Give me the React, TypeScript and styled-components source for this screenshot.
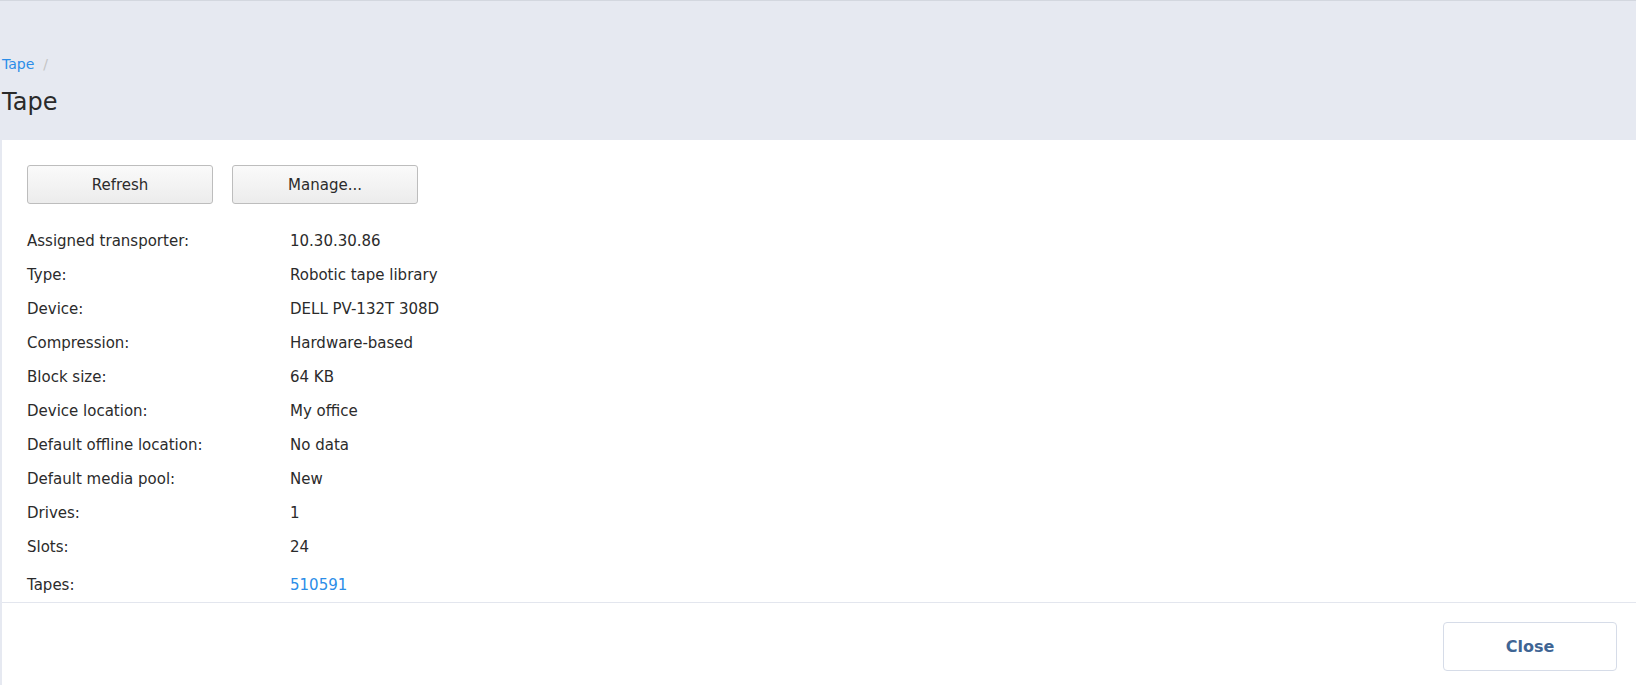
import React from 'react';
import styled, { createGlobalStyle } from 'styled-components';

const GlobalStyle = createGlobalStyle`
  html, body {
    margin: 0;
    padding: 0;
    background: #e6e9f1;
    font-family: "DejaVu Sans", Verdana, sans-serif;
    color: #2b2b2b;
  }
`;

const Page = styled.div`
  display: flex;
  flex-direction: column;
  height: 685px;
  border-top: 1px solid #d3d7df;
  box-sizing: border-box;
`;

const Header = styled.header`
  height: 139px;
  padding: 52px 0 0 2px;
  box-sizing: border-box;
`;

const Breadcrumb = styled.div`
  font-size: 14px;
  line-height: 22px;
  color: #2b8de8;
  display: flex;
  gap: 9px;
`;

const Separator = styled.span`
  color: #c4c4c4;
`;

const Title = styled.h1`
  margin: 11px 0 0;
  font-size: 24px;
  font-weight: normal;
  line-height: 32px;
  color: #2a2a2a;
`;

const Panel = styled.main`
  flex: 1;
  margin-left: 2px;
  background: #ffffff;
  display: flex;
  flex-direction: column;
`;

const Body = styled.section`
  padding: 25px 0 0 25px;
`;

const Toolbar = styled.div`
  display: flex;
  gap: 19px;
  margin-bottom: 20px;
`;

const Button = styled.button`
  width: 186px;
  height: 39px;
  border: 1px solid #bdbdbd;
  border-radius: 3px;
  background: linear-gradient(#fafafa, #ececec);
  font-family: inherit;
  font-size: 15px;
  color: #2b2b2b;
  cursor: pointer;
`;

const InfoList = styled.dl`
  margin: 0;
  display: grid;
  grid-template-columns: 263px 1fr;
`;

const Label = styled.dt<{ $extra?: boolean }>`
  margin: 0;
  font-size: 15px;
  line-height: 34px;
  padding-top: ${(p) => (p.$extra ? '4px' : '0')};
`;

const Value = styled.dd<{ $link?: boolean; $extra?: boolean }>`
  margin: 0;
  font-size: 15px;
  line-height: 34px;
  padding-top: ${(p) => (p.$extra ? '4px' : '0')};
  color: ${(p) => (p.$link ? '#2b8de8' : '#2b2b2b')};
`;

const Footer = styled.footer`
  margin-top: auto;
  border-top: 1px solid #e3e6ee;
  display: flex;
  justify-content: flex-end;
  padding: 19px 19px 14px;
`;

const CloseButton = styled.button`
  width: 174px;
  height: 49px;
  border: 1px solid #d6dce8;
  border-radius: 4px;
  background: #ffffff;
  font-family: inherit;
  font-size: 16px;
  font-weight: bold;
  color: #3f6594;
  cursor: pointer;
`;

const rows: { label: string; value: string; link?: boolean }[] = [
  { label: 'Assigned transporter:', value: '10.30.30.86' },
  { label: 'Type:', value: 'Robotic tape library' },
  { label: 'Device:', value: 'DELL PV-132T 308D' },
  { label: 'Compression:', value: 'Hardware-based' },
  { label: 'Block size:', value: '64 KB' },
  { label: 'Device location:', value: 'My office' },
  { label: 'Default offline location:', value: 'No data' },
  { label: 'Default media pool:', value: 'New' },
  { label: 'Drives:', value: '1' },
  { label: 'Slots:', value: '24' },
  { label: 'Tapes:', value: '510591', link: true },
];

export default function App() {
  return (
    <>
      <GlobalStyle />
      <Page>
        <Header>
          <Breadcrumb>
            <span>Tape</span>
            <Separator>/</Separator>
          </Breadcrumb>
          <Title>Tape</Title>
        </Header>
        <Panel>
          <Body>
            <Toolbar>
              <Button>Refresh</Button>
              <Button>Manage...</Button>
            </Toolbar>
            <InfoList>
              {rows.map((r) => (
                <React.Fragment key={r.label}>
                  <Label $extra={r.link}>{r.label}</Label>
                  <Value $extra={r.link} $link={r.link}>{r.value}</Value>
                </React.Fragment>
              ))}
            </InfoList>
          </Body>
          <Footer>
            <CloseButton>Close</CloseButton>
          </Footer>
        </Panel>
      </Page>
    </>
  );
}
